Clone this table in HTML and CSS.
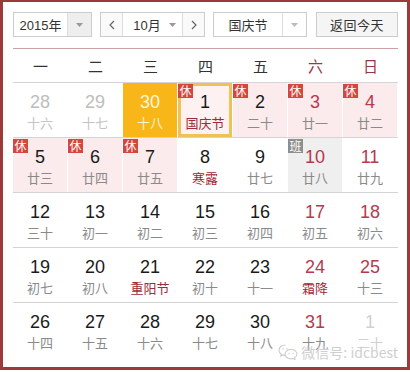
FILE: index.html
```html
<!DOCTYPE html>
<html lang="zh-CN">
<head>
<meta charset="utf-8">
<title>万年历</title>
<link rel="stylesheet" href="styles.css">
</head>
<body>
<div class="frame">
  <div class="toolbar">
    <div class="sel-box year">
      <span class="sel-text">2015年</span>
      <span class="sel-arrow grey"><svg width="7" height="4" viewBox="0 0 7 4"><path d="M0 0H7L3.5 4Z" fill="#999"/></svg></span>
    </div>
    <div class="month-group">
      <span class="nav"><svg width="6" height="10" viewBox="0 0 6 10"><path d="M5 1L1 5L5 9" fill="none" stroke="#666" stroke-width="1.2"/></svg></span>
      <span class="month"><span>10月</span><svg width="7" height="4" viewBox="0 0 7 4"><path d="M0 0H7L3.5 4Z" fill="#999"/></svg></span>
      <span class="nav"><svg width="6" height="10" viewBox="0 0 6 10"><path d="M1 1L5 5L1 9" fill="none" stroke="#666" stroke-width="1.2"/></svg></span>
    </div>
    <div class="sel-box holiday">
      <span class="sel-text">国庆节</span>
      <span class="sel-arrow"><svg width="7" height="4" viewBox="0 0 7 4"><path d="M0 0H7L3.5 4Z" fill="#bbb"/></svg></span>
    </div>
    <div class="today-btn">返回今天</div>
  </div>

  <div class="cal">
    <div class="week">
      <span>一</span><span>二</span><span>三</span><span>四</span><span>五</span><span class="we">六</span><span class="we">日</span>
    </div>

    <div class="row">
      <div class="cell other"><b>28</b><i>十六</i></div>
      <div class="cell other"><b>29</b><i>十七</i></div>
      <div class="cell today"><b>30</b><i>十八</i></div>
      <div class="cell rest chosen"><em class="badge">休</em><b>1</b><i class="fest">国庆节</i></div>
      <div class="cell rest"><em class="badge">休</em><b>2</b><i>二十</i></div>
      <div class="cell rest we"><em class="badge">休</em><b>3</b><i>廿一</i></div>
      <div class="cell rest we"><em class="badge">休</em><b>4</b><i>廿二</i></div>
    </div>
    <div class="row">
      <div class="cell rest"><em class="badge">休</em><b>5</b><i>廿三</i></div>
      <div class="cell rest"><em class="badge">休</em><b>6</b><i>廿四</i></div>
      <div class="cell rest"><em class="badge">休</em><b>7</b><i>廿五</i></div>
      <div class="cell"><b>8</b><i class="fest">寒露</i></div>
      <div class="cell"><b>9</b><i>廿七</i></div>
      <div class="cell work we"><em class="badge ban">班</em><b>10</b><i>廿八</i></div>
      <div class="cell we"><b>11</b><i>廿九</i></div>
    </div>
    <div class="row">
      <div class="cell"><b>12</b><i>三十</i></div>
      <div class="cell"><b>13</b><i>初一</i></div>
      <div class="cell"><b>14</b><i>初二</i></div>
      <div class="cell"><b>15</b><i>初三</i></div>
      <div class="cell"><b>16</b><i>初四</i></div>
      <div class="cell we"><b>17</b><i>初五</i></div>
      <div class="cell we"><b>18</b><i>初六</i></div>
    </div>
    <div class="row">
      <div class="cell"><b>19</b><i>初七</i></div>
      <div class="cell"><b>20</b><i>初八</i></div>
      <div class="cell"><b>21</b><i class="fest">重阳节</i></div>
      <div class="cell"><b>22</b><i>初十</i></div>
      <div class="cell"><b>23</b><i>十一</i></div>
      <div class="cell we"><b>24</b><i class="fest">霜降</i></div>
      <div class="cell we"><b>25</b><i>十三</i></div>
    </div>
    <div class="row last">
      <div class="cell"><b>26</b><i>十四</i></div>
      <div class="cell"><b>27</b><i>十五</i></div>
      <div class="cell"><b>28</b><i>十六</i></div>
      <div class="cell"><b>29</b><i>十七</i></div>
      <div class="cell"><b>30</b><i>十八</i></div>
      <div class="cell we"><b>31</b><i>十九</i></div>
      <div class="cell other next"><b>1</b><i>二十</i></div>
    </div>

    <div class="watermark">
      <svg width="20" height="16" viewBox="0 0 20 16">
        <path d="M7.5 1C3.9 1 1 3.3 1 6.2c0 1.6.9 3 2.3 4L2.8 12l2.2-1.1c.8.2 1.6.4 2.5.4" fill="none" stroke="#ccc" stroke-width="1.1"/>
        <path d="M13 5.5c-3.3 0-6 2.1-6 4.7s2.7 4.7 6 4.7c.7 0 1.4-.1 2-.3L17 15.5l-.5-1.8c1.5-.9 2.5-2.2 2.5-3.6 0-2.6-2.7-4.6-6-4.6z" fill="none" stroke="#ccc" stroke-width="1.1"/>
        <circle cx="5" cy="5" r=".8" fill="#ccc"/><circle cx="9" cy="5" r=".8" fill="#ccc"/>
        <circle cx="11" cy="9.5" r=".7" fill="#ccc"/><circle cx="15" cy="9.5" r=".7" fill="#ccc"/>
      </svg>
      <span>微信号: idcbest</span>
    </div>
  </div>
</div>
</body>
</html>
```

FILE: styles.css
```css
* { box-sizing: border-box; }
html, body { margin: 0; padding: 0; background: #fff; }
body {
  font-family: "Liberation Sans", Arial, "Noto Sans CJK SC", sans-serif;
  color: #222;
}
.frame {
  width: 410px;
  height: 370px;
  border: 3px solid #9c3a3a;
  border-top-width: 2px;
  padding: 10px 9px 0 10px;
}
.toolbar {
  display: flex;
  gap: 8px;
  height: 25px;
  margin-bottom: 11px;
  font-size: 13px;
  font-family: "Liberation Sans", "Noto Sans CJK SC", sans-serif;
  color: #333;
}
.sel-box {
  display: flex;
  border: 1px solid #ccc;
  background: #fff;
  height: 25px;
}
.sel-text {
  display: flex;
  align-items: center;
  justify-content: center;
}
.sel-arrow {
  display: flex;
  align-items: center;
  justify-content: center;
  width: 24px;
  border-left: 1px solid #ddd;
}
.sel-arrow.grey { background: #eee; }
.year { width: 79px; }
.year .sel-text { flex: 1; }
.holiday { width: 94px; }
.holiday .sel-text { flex: 1; }
.month-group {
  display: flex;
  width: 105px;
  border: 1px solid #ccc;
  height: 25px;
}
.nav {
  width: 22px;
  display: flex;
  align-items: center;
  justify-content: center;
  background: #fafafa;
}
.month-group .nav:first-child { border-right: 1px solid #ddd; }
.month-group .nav:last-child { border-left: 1px solid #ddd; }
.month {
  flex: 1;
  display: flex;
  align-items: center;
  justify-content: center;
  gap: 8px;
  padding-left: 4px;
}
.today-btn {
  margin-left: auto;
  width: 82px;
  height: 25px;
  border: 1px solid #ccc;
  background: #f5f5f5;
  display: flex;
  align-items: center;
  justify-content: center;
  letter-spacing: 0.5px;
}
.cal {
  position: relative;
  width: 385px;
  border-top: 1px solid #c9a3a3;
}
.week {
  display: grid;
  grid-template-columns: repeat(7, 55px);
  height: 34px;
  border-bottom: 1px solid #d4d4d4;
  font-family: "Noto Sans CJK SC", sans-serif;
  font-size: 15px;
  color: #333;
}
.week span {
  display: flex;
  align-items: center;
  justify-content: center;
  padding-bottom: 1px;
}
.week .we { color: #9c3444; }
.row {
  display: grid;
  grid-template-columns: repeat(7, 55px);
  height: 55px;
  border-bottom: 1px solid #d4d4d4;
}
.row.last { border-bottom: none; }
.cell {
  position: relative;
  display: flex;
  flex-direction: column;
  align-items: center;
  padding-top: 7px;
  margin-right: 1px;
}
.cell b {
  font-weight: normal;
  font-size: 18px;
  line-height: 24px;
  color: #1a1a1a;
}
.cell i {
  font-style: normal;
  font-family: "Noto Sans CJK SC", sans-serif;
  font-size: 13px;
  line-height: 18px;
  color: #8a8a8a;
}
.cell i.fest { color: #a02a36; }
.cell.we b { color: #b53a4e; }
.cell.other b { color: #bdbdbd; }
.cell.other i { color: #c4c4c4; }
.cell.next b, .cell.next i { color: #d0d0d0; }
.cell.rest { background: #fcebec; }
.cell.work { background: #efefef; }
.cell.today { background: #f9b619; }
.cell.today b { color: #fff6dc; }
.cell.today i { color: #fff3d0; }
.cell.chosen {
  border: 3px solid #efc257;
  background: #fdf1f1;
  padding-top: 4px;
}
.badge {
  position: absolute;
  left: 0;
  top: 1px;
  width: 15px;
  height: 14px;
  background: #d4463e;
  color: #fff;
  font-style: normal;
  font-family: "Noto Sans CJK SC", sans-serif;
  font-size: 12px;
  line-height: 14px;
  text-align: center;
}
.cell.chosen .badge { left: -3px; top: -2px; }
.badge.ban { background: #8e8e8e; }
.watermark {
  position: absolute;
  right: 0;
  bottom: -3px;
  display: flex;
  align-items: center;
  gap: 3px;
  color: #cfcfcf;
  font-family: "Noto Sans CJK SC", sans-serif;
  font-size: 14px;
  line-height: 18px;
}
```
